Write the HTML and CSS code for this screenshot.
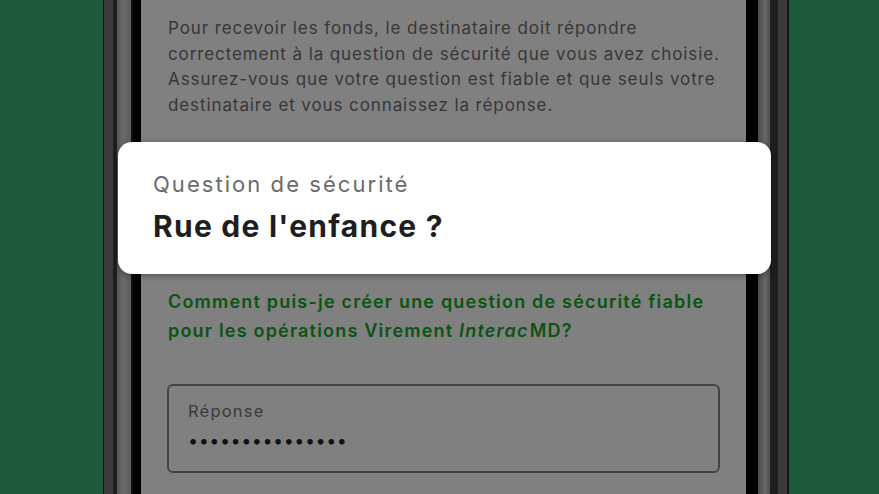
FILE: index.html
```html
<!DOCTYPE html>
<html lang="fr">
<head>
<meta charset="utf-8">
<title>Question de sécurité</title>
<link rel="stylesheet" href="styles.css">
</head>
<body>
<div class="phone">
  <div class="screen">
    <p class="intro">Pour recevoir les fonds, le destinataire doit répondre<br>correctement à la question de sécurité que vous avez choisie.<br>Assurez-vous que votre question est fiable et que seuls votre<br>destinataire et vous connaissez la réponse.</p>
    <div class="question-slot"></div>
    <p class="help-link">Comment puis-je créer une question de sécurité fiable<br>pour les opérations Virement <em>Interac</em>MD?</p>
    <div class="field">
      <span class="field-label">Réponse</span>
      <span class="field-value">•••••••••••••••</span>
    </div>
  </div>
</div>
<div class="callout">
  <div class="callout-label">Question de sécurité</div>
  <div class="callout-value">Rue de l'enfance ?</div>
</div>
</body>
</html>
```
FILE: styles.css
```css
html, body {
  margin: 0;
  padding: 0;
}
body {
  width: 879px;
  height: 494px;
  overflow: hidden;
  background: #1d5a3b;
  font-family: Inter, "Noto Sans", sans-serif;
  position: relative;
}
.phone {
  margin-left: 103px;
  width: 686px;
  height: 494px;
  display: flex;
  background: linear-gradient(to right,
    #151515 0px, #151515 1px,
    #3b3b3b 1px, #3b3b3b 10px,
    #1e1e1e 10px, #1e1e1e 14px,
    #555 14px, #6a6a6a 20px, #5c5c5c 28px,
    #161616 28px, #000 31px, #000 38px,
    #000 643px, #000 655px,
    #4a4a4a 655px, #686868 662px, #4f4f4f 667px,
    #1e1e1e 667px, #1e1e1e 675px,
    #3b3b3b 675px, #3b3b3b 684px,
    #151515 684px, #151515 686px);
}
.screen {
  margin-left: 38px;
  width: 605px;
  height: 494px;
  background: #808080;
  box-sizing: border-box;
  padding: 16px 20px 0 27px;
  display: flex;
  flex-direction: column;
  white-space: nowrap;
}
.intro {
  margin: 0;
  font-size: 17px;
  line-height: 25.5px;
  letter-spacing: 0.9px;
  color: #373737;
}
.question-slot {
  height: 170px;
  flex: none;
}
.help-link {
  margin: 0;
  font-size: 18px;
  line-height: 28.5px;
  font-weight: 600;
  letter-spacing: 1.2px;
  color: #0b5412;
}
.help-link em {
  font-style: italic;
  padding-right: 1px;
}
.field {
  margin-top: 39px;
  margin-left: -1px;
  margin-right: 6px;
  height: 89px;
  box-sizing: border-box;
  border: 2px solid #434343;
  border-radius: 6px;
  padding: 14px 19px 0;
  display: flex;
  flex-direction: column;
  gap: 7px;
}
.field-label {
  font-size: 16.5px;
  line-height: 22px;
  letter-spacing: 1.2px;
  color: #3a3a3a;
}
.field-value {
  font-size: 18px;
  line-height: 24px;
  letter-spacing: 0.5px;
  color: #111;
}
.callout {
  position: absolute;
  left: 118px;
  top: 142px;
  width: 653px;
  height: 132px;
  box-sizing: border-box;
  background: #fff;
  border-radius: 14px;
  padding: 30px 35px 0;
  box-shadow: 0 2px 6px rgba(0, 0, 0, 0.35);
}
.callout-label {
  font-size: 22px;
  line-height: 24px;
  letter-spacing: 2.05px;
  color: #6b6b6b;
}
.callout-value {
  margin-top: 12px;
  font-size: 30px;
  line-height: 36px;
  font-weight: 700;
  letter-spacing: 1.25px;
  color: #1e1e1e;
}
```
